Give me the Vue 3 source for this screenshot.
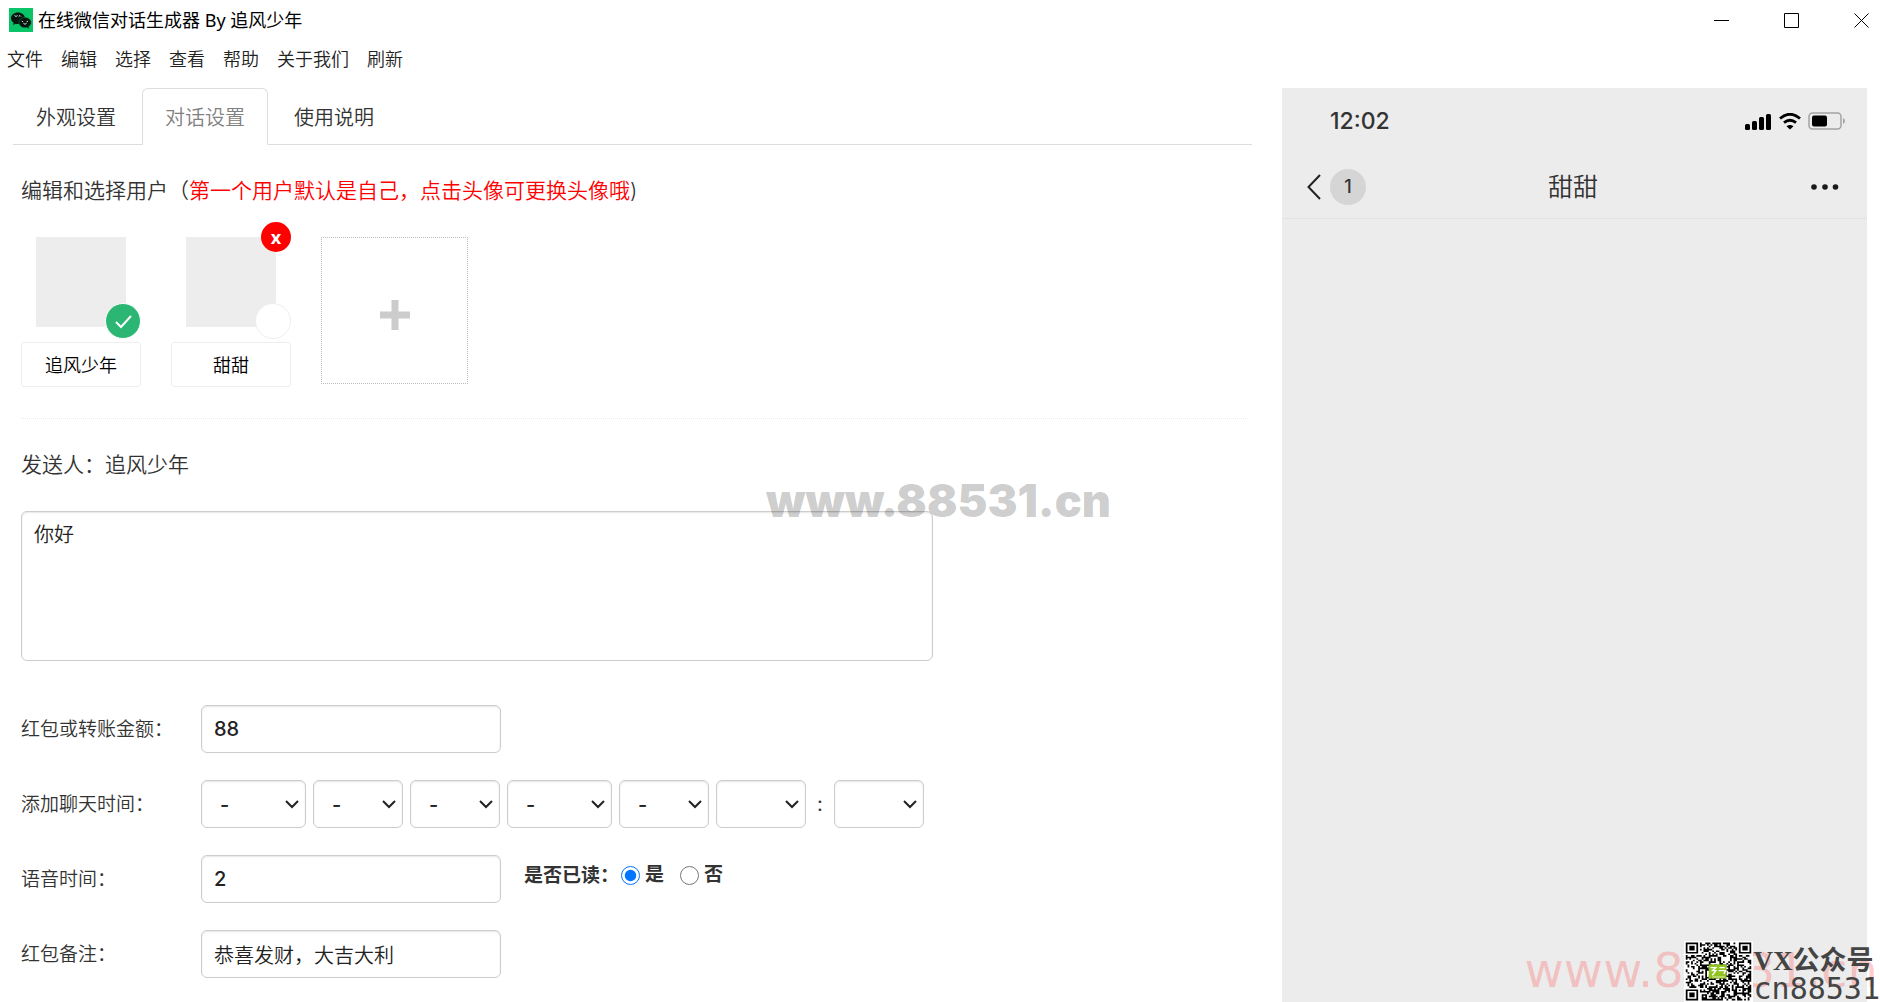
<template>
  <div class="window">
    <header class="title-bar">
      <svg class="logo" viewBox="0 0 24 24" aria-hidden="true">
        <rect width="24" height="24" fill="#09c567" />
        <path d="M9 4.500c-4 0-7 2.600-7 5.800 0 1.900 1 3.500 2.700 4.500l-.5 2.200 2.500-1.200c.8.200 1.500.3 2.300.3 4 0 7-2.600 7-5.800S13 4.500 9 4.500z" fill="#06160e" />
        <path d="M16 9.500c-3.500 0-6.200 2.300-6.200 5.100s2.700 5.100 6.200 5.100c.7 0 1.400-.1 2-.3l2.200 1.100-.5-1.900c1.500-.9 2.500-2.400 2.500-4 0-2.800-2.700-5.100-6.200-5.100z" fill="#06160e" stroke="#0a8f4e" stroke-width=".5" />
        <path d="M5.500 7.500l1.500 1 1.500-1M9.700 8.500l1.300-1 1 1M12.800 13l1.400 1M17.500 14l1.500-1M14.500 15.500q1.500 1.400 3 0" fill="none" stroke="#d5e5dc" />
      </svg>
      <h1>在线微信对话生成器 By 追风少年</h1>
      <div class="window-controls">
        <button type="button" aria-label="最小化">
          <svg viewBox="0 0 16 16"><path d="M0 7.500h15" /></svg>
        </button>
        <button type="button" aria-label="最大化">
          <svg viewBox="0 0 16 16"><path d="M.5.5h14v14H.5z" /></svg>
        </button>
        <button type="button" aria-label="关闭">
          <svg viewBox="0 0 16 16"><path d="M.5.5l14 14M14.500.5l-14 14" /></svg>
        </button>
      </div>
    </header>

    <nav class="menu">
      <a v-for="item in menu" :key="item" href="#">{{ item }}</a>
    </nav>

    <main class="content">
      <section class="settings">
        <div class="tabs">
          <button
            v-for="tab in tabs"
            :key="tab"
            type="button"
            :class="{ active: tab === activeTab }"
            @click="activeTab = tab"
          >{{ tab }}</button>
        </div>

        <div class="panel">
          <h2>编辑和选择用户（<span class="warning">第一个用户默认是自己，点击头像可更换头像哦</span>)</h2>

          <div class="users">
            <div v-for="(user, index) in users" :key="index" class="user">
              <button class="avatar" type="button" :aria-label="user.name" @click="selected = index"></button>
              <span class="check" :class="{ checked: selected === index }">
                <svg v-if="selected === index" viewBox="0 0 34 34"><path d="M10 18l5 5 10-11" /></svg>
              </span>
              <button v-if="index > 0" class="remove" type="button">x</button>
              <input v-model="user.name" type="text" aria-label="用户名">
            </div>
            <button class="add-user" type="button" aria-label="添加用户">
              <svg viewBox="0 0 30 30"><path d="M11.500 0h7v11.500H30v7H18.500V30h-7V18.500H0v-7h11.500z" /></svg>
            </button>
          </div>

          <hr>

          <p class="sender">发送人：{{ users[selected].name }}</p>
          <textarea v-model="message" aria-label="消息"></textarea>

          <div class="form">
            <div class="row">
              <label for="amount">红包或转账金额：</label>
              <input id="amount" v-model="amount" type="text">
            </div>
            <div class="row">
              <label for="time-0">添加聊天时间：</label>
              <div class="times">
                <template v-for="(time, index) in times" :key="index">
                  <span v-if="index === 6" class="colon">:</span>
                  <span class="select" :class="{ wide: time.wide }">
                    <select :id="`time-${index}`" :aria-label="time.label">
                      <option>{{ time.value }}</option>
                    </select>
                    <svg viewBox="0 0 14 9"><path d="M1 1l6 6 6-6" /></svg>
                  </span>
                </template>
              </div>
            </div>
            <div class="row">
              <label for="voice">语音时间：</label>
              <input id="voice" v-model="voice" type="text">
              <div class="read">
                <span>是否已读：</span>
                <label><input v-model="read" type="radio" name="read" value="yes">是</label>
                <label><input v-model="read" type="radio" name="read" value="no">否</label>
              </div>
            </div>
            <div class="row">
              <label for="remark">红包备注：</label>
              <input id="remark" v-model="remark" type="text">
            </div>
          </div>
        </div>
      </section>

      <section class="phone">
        <div class="status">
          <span>12:02</span>
          <div class="status-icons">
            <svg class="signal" viewBox="0 0 27 17">
              <rect y="11" width="5" height="6" rx="1.500" />
              <rect x="7" y="8" width="5" height="9" rx="1.500" />
              <rect x="14" y="4" width="5" height="13" rx="1.500" />
              <rect x="21" y="1" width="5" height="16" rx="1.500" />
            </svg>
            <svg class="wifi" viewBox="0 0 22 17">
              <path d="M1 5.500Q11-3 21 5.500M5 9.700q6-4.800 12 0" fill="none" stroke="#000" stroke-width="2.800" />
              <path d="M7.500 13.200q3.500-2.600 7 0L11 16.500z" />
            </svg>
            <svg class="battery" viewBox="0 0 38 18">
              <rect x="1" y="1" width="32" height="16" rx="3.500" fill="none" stroke="#a3a3a3" stroke-width="1.500" />
              <rect x="4" y="3.500" width="15" height="11" rx="2" />
              <path d="M35 6q2 .8 2 3t-2 3z" fill="#a3a3a3" />
            </svg>
          </div>
        </div>
        <div class="chat-header">
          <div class="back">
            <svg viewBox="0 0 14 26"><path d="M13 1L1.500 13 13 25" /></svg>
            <span>1</span>
          </div>
          <strong>甜甜</strong>
          <div class="more">
            <svg viewBox="0 0 28 6">
              <circle cx="3" cy="3" r="2.800" />
              <circle cx="14" cy="3" r="2.800" />
              <circle cx="24.500" cy="3" r="2.800" />
            </svg>
          </div>
        </div>
      </section>
    </main>

    <div class="mark-center">www.88531.cn</div>
    <div class="mark-red">www.88531.cn</div>
    <div class="contact">
      <svg class="qr" viewBox="-1 -1 39 39" preserveAspectRatio="none" aria-hidden="true">
        <rect x="-1" y="-1" width="39" height="39" fill="#fff" />
        <path :d="qrPath" />
        <rect x="13" y="14" width="10" height="9" fill="#8fc31f" />
        <path d="M14 16h3l-2 2h2l-2 3M19 16h3M18.500 18h4l-1 2" fill="none" stroke="#fff" stroke-width=".8" />
        <path d="M15 22h7" stroke="#e3f2c0" stroke-width=".6" />
      </svg>
      <div class="contact-text">
        <span class="contact-name">VX公众号</span>
        <span class="contact-id">cn88531</span>
      </div>
    </div>
  </div>
</template>

<script setup>
import { ref } from "vue";

const menu = ['文件', '编辑', '选择', '查看', '帮助', '关于我们', '刷新'];
const tabs = ['外观设置', '对话设置', '使用说明'];
const activeTab = ref('对话设置');

const users = ref([{ name: '追风少年' }, { name: '甜甜' }]);
const selected = ref(0);

const message = ref('你好');
const amount = ref('88');
const voice = ref('2');
const read = ref('yes');
const remark = ref('恭喜发财，大吉大利');

const times = [
  { label: '年', value: '-', wide: true },
  { label: '月', value: '-' },
  { label: '日', value: '-' },
  { label: '星期', value: '-', wide: true },
  { label: '时段', value: '-' },
  { label: '时', value: '' },
  { label: '分', value: '' },
];

// 37 x 37 modules with three finder squares and one alignment square
const size = 37;
const square = (x, y, left, top, width) => {
  const middle = (width - 1) / 2;
  const distance = Math.max(Math.abs(x - left - middle), Math.abs(y - top - middle));
  return distance > middle ? null : distance !== middle - 1;
};

const buildQr = () => {
  let path = '';
  let seed = 88531;
  for (let y = 0; y < size; y++) {
    for (let x = 0; x < size; x++) {
      seed = (seed * 1103515245 + 12345) % 2147483648;
      let dark = seed / 2147483648 < 0.52;
      if ((x < 8 && y < 8) || (x > 28 && y < 8) || (x < 8 && y > 28)) {
        dark = square(x, y, 0, 0, 7) || square(x, y, 30, 0, 7) || square(x, y, 0, 30, 7);
      } else if (square(x, y, 28, 28, 5) !== null) {
        dark = square(x, y, 28, 28, 5);
      }
      if (dark) {
        path += `M${x} ${y}h1v1h-1z`;
      }
    }
  }
  return path;
};
const qrPath = buildQr();
</script>

<style>
body {
  background: #fff;
}
</style>

<style scoped>
* {
  box-sizing: border-box;
}

.window {
  position: relative;
  display: flex;
  flex-direction: column;
  min-height: 100vh;
  overflow: hidden;
  color: #333;
  font-family: Inter, "Noto Sans CJK SC", sans-serif;
  font-size: 20px;
  font-weight: 350;
}

button,
input,
select,
textarea {
  margin: 0;
  font: inherit;
  color: inherit;
}

button {
  padding: 0;
  border: 0;
  background: none;
}

svg {
  display: block;
}

.title-bar {
  display: flex;
  align-items: center;
  height: 40px;
  padding-left: 9px;
}

.logo {
  width: 24px;
  height: 24px;
  margin-right: 5px;
}

h1 {
  margin: 0;
  color: #000;
  font-family: "Noto Sans", "Noto Sans CJK SC", sans-serif;
  font-size: 18px;
  font-weight: 400;
  line-height: 24px;
}

.window-controls {
  display: flex;
  margin-left: auto;
}

.window-controls button {
  display: flex;
  justify-content: center;
  align-items: center;
  width: 70px;
  height: 40px;
  padding-top: 2px;
}

.window-controls button:last-child {
  width: 53px;
  padding-left: 17px;
}

.window-controls svg {
  width: 16px;
  height: 16px;
  fill: none;
  stroke: #000;
}

.menu {
  display: flex;
  gap: 18px;
  height: 38px;
  padding: 0 7px;
  font-size: 18px;
  line-height: 40px;
}

.menu a {
  color: #222;
  text-decoration: none;
}

.content {
  display: flex;
  flex: 1;
  gap: 30px;
  padding: 10px 13px 0;
}

.settings {
  flex: 1;
  min-width: 0;
}

.tabs {
  display: flex;
  gap: 3px;
  height: 57px;
  border-bottom: 1px solid #ddd;
}

.tabs button {
  height: 57px;
  padding: 0 22px;
  border: 1px solid transparent;
  border-radius: 6px 6px 0 0;
}

.tabs .active {
  border-color: #ddd #ddd #fff;
  background: #fff;
  color: #808080;
}

.panel {
  padding: 31px 4px 24px 8px;
}

h2,
.sender {
  margin: 0;
  font-size: 21px;
  font-weight: 350;
  line-height: 30px;
}

.warning {
  color: #f00;
}

.users {
  display: flex;
  gap: 30px;
  margin-top: 31px;
}

.user {
  position: relative;
  width: 120px;
}

.avatar {
  display: block;
  width: 90px;
  height: 90px;
  margin: 0 15px 15px;
  background: #ededed;
}

.user input {
  display: block;
  width: 100%;
  height: 45px;
  padding: 0 0 2px;
  border: 1px solid #eee;
  border-radius: 3px;
  color: #000;
  font-size: 18px;
  text-align: center;
}

.check {
  position: absolute;
  top: 66px;
  right: 0;
  width: 36px;
  height: 36px;
  border: 1px solid #eee;
  border-radius: 50%;
  background: #fff;
}

.checked {
  border-color: #fff;
  background: #2bb673;
}

.check svg {
  fill: none;
  stroke: #fff;
  stroke-width: 2;
}

.remove {
  position: absolute;
  top: -15px;
  right: 0;
  width: 30px;
  height: 30px;
  border-radius: 50%;
  background: #f00;
  color: #fff;
  font-family: "Noto Sans", sans-serif;
  font-size: 18px;
  font-weight: 700;
  line-height: 30px;
}

.add-user {
  display: flex;
  justify-content: center;
  align-items: center;
  width: 147px;
  height: 147px;
  border: 1px dotted #bbb;
}

.add-user svg {
  width: 30px;
  height: 30px;
  margin-top: 8px;
  fill: #ccc;
}

hr {
  margin: 31px 0;
  border: 0;
  border-top: 1px dotted #eaeaea;
}

textarea,
.row > input,
select {
  border: 1px solid #ccc;
  border-radius: 6px;
  background: #fff;
  box-shadow: inset 0 1px 2px rgba(0, 0, 0, 0.1);
  color: #222;
}

textarea {
  display: block;
  width: calc(75% - 8px);
  height: 150px;
  margin-top: 31px;
  padding: 8px 12px;
  line-height: 30px;
  resize: none;
}

.form {
  display: flex;
  flex-direction: column;
  gap: 27px;
  margin-top: 44px;
}

.row {
  display: flex;
  height: 48px;
}

.row > label {
  width: 180px;
  font-size: 19px;
  line-height: 50px;
}

.row > input {
  width: 300px;
  padding: 0 12px;
  font-weight: 500;
}

.row > #remark {
  font-weight: 350;
}

.times {
  display: flex;
  gap: 7px;
  line-height: 48px;
}

.select {
  position: relative;
  width: 90px;
}

.wide {
  width: 105px;
}

select {
  width: 100%;
  height: 48px;
  padding: 0 18px;
  appearance: none;
  font-weight: 500;
}

.select svg {
  position: absolute;
  top: 20px;
  right: 7px;
  width: 14px;
  height: 9px;
  fill: none;
  stroke: #222;
  stroke-width: 2;
  pointer-events: none;
}

.colon {
  width: 14px;
  text-align: center;
  font-weight: 400;
}

.read {
  display: flex;
  margin-left: 23px;
  font-size: 19px;
  font-weight: 700;
  line-height: 42px;
}

.read label {
  display: flex;
  align-items: center;
  height: 40px;
  margin-right: 14px;
}

.read input {
  width: 19px;
  height: 19px;
  margin: 0 5px 0 2px;
}

.phone {
  width: 585px;
  background: #ececec;
}

.status,
.chat-header {
  display: flex;
  justify-content: space-between;
  align-items: center;
}

.status {
  height: 66px;
  padding: 0 21px 0 48px;
  font-size: 23px;
  font-weight: 500;
}

.status-icons {
  display: flex;
  align-items: center;
  gap: 7px;
}

.signal {
  width: 27px;
  height: 17px;
}

.wifi {
  width: 22px;
  height: 17px;
}

.battery {
  width: 38px;
  height: 18px;
}

.chat-header {
  height: 65px;
  padding: 2px 28px 0 25px;
  border-bottom: 1px solid #e2e2e2;
}

.chat-header strong {
  font-size: 25px;
  font-weight: 350;
  line-height: 36px;
}

.back {
  display: flex;
  align-items: center;
  flex: 1;
  gap: 9px;
}

.back svg {
  width: 14px;
  height: 26px;
  fill: none;
  stroke: #222;
  stroke-width: 2;
}

.back span {
  width: 36px;
  height: 36px;
  border-radius: 50%;
  background: #d5d5d5;
  font-size: 18px;
  font-weight: 500;
  line-height: 36px;
  text-align: center;
}

.more {
  display: flex;
  justify-content: flex-end;
  flex: 1;
}

.more svg {
  width: 28px;
  height: 6px;
  fill: #191919;
}

.mark-center,
.mark-red,
.contact {
  position: absolute;
  pointer-events: none;
  white-space: nowrap;
}

.mark-center {
  top: 474px;
  left: 766px;
  color: rgba(0, 0, 0, 0.21);
  font-size: 45px;
  font-weight: 900;
  line-height: 54px;
}

.mark-red {
  right: 2px;
  bottom: 4px;
  color: rgba(255, 80, 80, 0.28);
  font-family: "DejaVu Sans", sans-serif;
  font-size: 48px;
  font-weight: 400;
  line-height: 56px;
}

.contact {
  right: 0;
  bottom: 0;
  display: flex;
  gap: 1px;
  color: #444;
}

.qr {
  width: 69px;
  height: 61px;
}

.contact-text {
  display: flex;
  flex-direction: column;
  padding-top: 5px;
}

.contact-name {
  font-family: "Liberation Serif", "Noto Sans CJK SC", serif;
  font-size: 27px;
  font-weight: 700;
  line-height: 30px;
}

.contact-id {
  font-family: "DejaVu Sans Mono", monospace;
  font-size: 30px;
  font-weight: 400;
  line-height: 26px;
}
</style>
